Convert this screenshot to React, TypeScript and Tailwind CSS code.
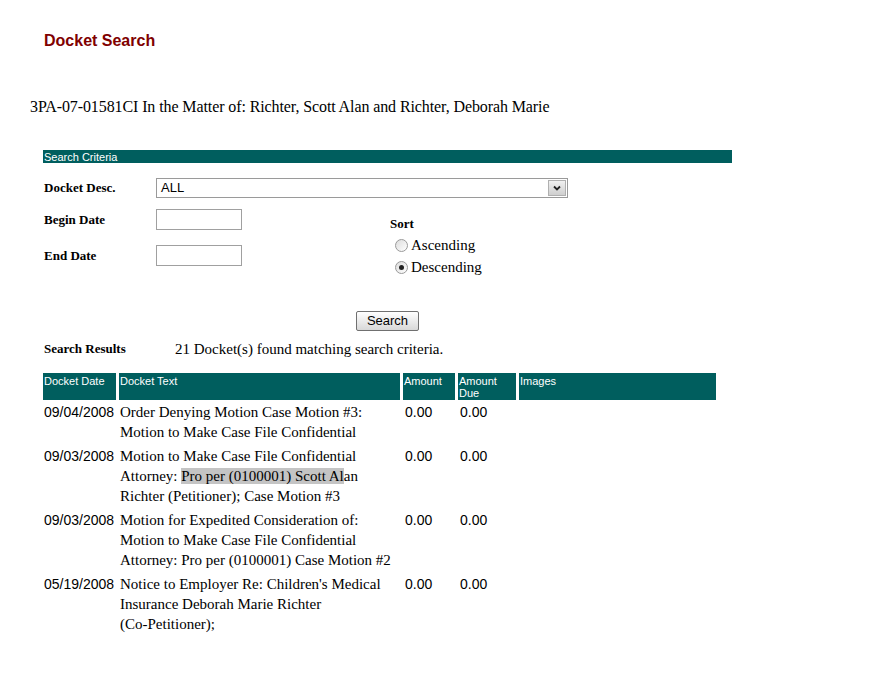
import React from 'react';

const serif = "font-['Liberation_Serif','Times_New_Roman',serif]";
const sans = "font-['Liberation_Sans',Arial,sans-serif]";
const small = "font-['Liberation_Sans',Tahoma,sans-serif] text-[11px] leading-[12px] text-white";

type Row = {
  date: string;
  text: React.ReactNode;
};

const rows: Row[] = [
  {
    date: '09/04/2008',
    text: (
      <>
        Order Denying Motion Case Motion #3:
        <br />
        Motion to Make Case File Confidential
      </>
    ),
  },
  {
    date: '09/03/2008',
    text: (
      <>
        Motion to Make Case File Confidential
        <br />
        Attorney: <span className="bg-[#c4c4c4]">Pro per (0100001) Scott Al</span>an
        <br />
        Richter (Petitioner); Case Motion #3
      </>
    ),
  },
  {
    date: '09/03/2008',
    text: (
      <>
        Motion for Expedited Consideration of:
        <br />
        Motion to Make Case File Confidential
        <br />
        Attorney: Pro per (0100001) Case Motion #2
      </>
    ),
  },
  {
    date: '05/19/2008',
    text: (
      <>
        Notice to Employer Re: Children's Medical
        <br />
        Insurance Deborah Marie Richter
        <br />
        (Co-Petitioner);
      </>
    ),
  },
];

function Radio({ checked }: { checked?: boolean }) {
  return (
    <span className="w-[13px] h-[13px] rounded-full border border-[#9a9a9a] bg-gradient-to-br from-[#dcdcdc] to-white flex items-center justify-center shrink-0">
      {checked && <span className="w-[5px] h-[5px] rounded-full bg-[#222]" />}
    </span>
  );
}

function TextBox() {
  return <div className="w-[86px] h-[21px] border border-[#a0a0a0] bg-white" />;
}

export default function App() {
  const grid = 'grid grid-cols-[73px_281px_52px_58px_197px] gap-x-[3px]';

  return (
    <div className="w-[876px] h-[693px] bg-white pl-[43px] text-black">
      <div className={`${sans} pt-[32px] ml-[1px] text-[16px] leading-[18px] font-bold text-[#800000]`}>
        Docket Search
      </div>

      <div className={`${serif} mt-[47px] ml-[-13px] text-[16px] leading-[20px] tracking-[-0.1px]`}>
        3PA-07-01581CI In the Matter of: Richter, Scott Alan and Richter, Deborah Marie
      </div>

      <div className="mt-[33px] w-[689px] h-[13px] bg-[#005e5e] pl-[1px] flex items-center">
        <span className={small}>Search Criteria</span>
      </div>

      {/* docket desc */}
      <div className="mt-[15px] flex items-center h-[20px]">
        <div className={`${serif} w-[113px] pl-[1px] text-[13px] font-bold`}>Docket Desc.</div>
        <div className="w-[412px] h-[20px] border border-[#9a9a9a] bg-white flex items-center justify-between pl-[4px] pr-[1px]">
          <span className={`${sans} text-[13px]`}>ALL</span>
          <div className="w-[18px] h-[16px] border border-[#b0b0b0] bg-gradient-to-b from-[#f0f0f0] to-[#cfcfcf] flex items-center justify-center">
            <svg width="8" height="6" viewBox="0 0 8 6">
              <path d="M1 1.5 L4 4.5 L7 1.5" stroke="#222" strokeWidth="1.8" fill="none" />
            </svg>
          </div>
        </div>
      </div>

      {/* dates + sort */}
      <div className="mt-[11px] flex">
        <div className="w-[347px] flex flex-col gap-[15px]">
          <div className="flex items-center h-[21px]">
            <div className={`${serif} w-[113px] pl-[1px] text-[13px] font-bold`}>Begin Date</div>
            <TextBox />
          </div>
          <div className="flex items-center h-[21px]">
            <div className={`${serif} w-[113px] pl-[1px] text-[13px] font-bold`}>End Date</div>
            <TextBox />
          </div>
        </div>
        <div className={`${serif} mt-[7px]`}>
          <div className="text-[13px] font-bold leading-[16px]">Sort</div>
          <div className="mt-[2px] pl-[5px]">
            <label className="flex items-center gap-[3px] h-[22px] text-[15px]">
              <Radio />
              Ascending
            </label>
            <label className="flex items-center gap-[3px] h-[22px] text-[15px]">
              <Radio checked />
              Descending
            </label>
          </div>
        </div>
      </div>

      <div className="mt-[29px] ml-[313px]">
        <button
          className={`${sans} w-[63px] h-[20px] text-[13px] leading-[18px] border border-[#707070] rounded-[2px] bg-gradient-to-b from-white to-[#d8d8d8] text-black`}
        >
          Search
        </button>
      </div>

      <div className="mt-[8px] flex items-center h-[20px]">
        <div className={`${serif} w-[132px] pl-[1px] text-[13px] font-bold`}>Search Results</div>
        <div className={`${serif} text-[15px]`}>21 Docket(s) found matching search criteria.</div>
      </div>

      {/* results */}
      <div className={`${grid} mt-[14px] h-[27px]`}>
        <div className={`bg-[#005e5e] pl-[1px] pt-[2px] ${small}`}>Docket Date</div>
        <div className={`bg-[#005e5e] pl-[1px] pt-[2px] ${small}`}>Docket Text</div>
        <div className={`bg-[#005e5e] pl-[1px] pt-[2px] ${small}`}>Amount</div>
        <div className={`bg-[#005e5e] pl-[1px] pt-[2px] ${small}`}>
          Amount
          <br />
          Due
        </div>
        <div className={`bg-[#005e5e] pl-[1px] pt-[2px] ${small}`}>Images</div>
      </div>

      <div className="mt-[2px] flex flex-col gap-[4px]">
        {rows.map((r, i) => (
          <div key={i} className={grid}>
            <div className={`${sans} pl-[1px] text-[14px] leading-[20px]`}>{r.date}</div>
            <div className={`${serif} pl-[1px] text-[15px] leading-[20px] whitespace-nowrap`}>{r.text}</div>
            <div className={`${sans} pl-[2px] text-[14px] leading-[20px]`}>0.00</div>
            <div className={`${sans} pl-[2px] text-[14px] leading-[20px]`}>0.00</div>
            <div />
          </div>
        ))}
      </div>
    </div>
  );
}
